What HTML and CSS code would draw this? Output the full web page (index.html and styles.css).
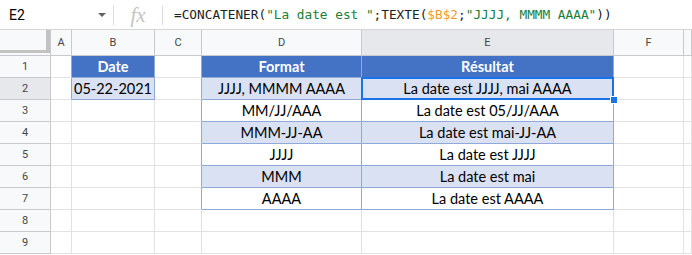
FILE: index.html
```html
<!DOCTYPE html>
<html lang="fr">
<head>
    <meta charset="UTF-8">
    <title>TEXTE - format de date</title>
    <link rel="stylesheet" href="styles.css">
</head>
<body>

    <div class="formula-bar">
        <div class="name-box">
            <span class="cell-ref">E2</span>
            <span class="caret"></span>
        </div>
        <div class="sep"></div>
        <div class="fx">fx</div>
        <div class="sep"></div>
        <div class="formula">=CONCATENER(<span class="str">"La date est "</span>;TEXTE(<span class="ref">$B$2</span>;<span class="str">"JJJJ, MMMM AAAA"</span>))</div>
    </div>

    <div class="sheet">
        <!-- en-tetes de colonnes -->
        <div class="corner"><div class="freeze"></div></div>
        <div class="col-h">A</div>
        <div class="col-h">B</div>
        <div class="col-h">C</div>
        <div class="col-h">D</div>
        <div class="col-h sel">E</div>
        <div class="col-h">F</div>
        <div class="col-h"></div>

        <!-- ligne 1 -->
        <div class="row-h">1</div>
        <div class="cell tb-r"></div>
        <div class="cell th">Date</div>
        <div class="cell tb-r"></div>
        <div class="cell th">Format</div>
        <div class="cell th">Résultat</div>
        <div class="cell"></div>
        <div class="cell"></div>

        <!-- ligne 2 -->
        <div class="row-h sel">2</div>
        <div class="cell tb-r"></div>
        <div class="cell td band">05-22-2021</div>
        <div class="cell tb-r"></div>
        <div class="cell td band">JJJJ, MMMM AAAA</div>
        <div class="cell td band active">La date est JJJJ, mai AAAA<span class="handle"></span></div>
        <div class="cell"></div>
        <div class="cell"></div>

        <!-- ligne 3 -->
        <div class="row-h">3</div>
        <div class="cell"></div>
        <div class="cell"></div>
        <div class="cell tb-r"></div>
        <div class="cell td">MM/JJ/AAA</div>
        <div class="cell td">La date est 05/JJ/AAA</div>
        <div class="cell"></div>
        <div class="cell"></div>

        <!-- ligne 4 -->
        <div class="row-h">4</div>
        <div class="cell"></div>
        <div class="cell"></div>
        <div class="cell tb-r"></div>
        <div class="cell td band">MMM-JJ-AA</div>
        <div class="cell td band">La date est mai-JJ-AA</div>
        <div class="cell"></div>
        <div class="cell"></div>

        <!-- ligne 5 -->
        <div class="row-h">5</div>
        <div class="cell"></div>
        <div class="cell"></div>
        <div class="cell tb-r"></div>
        <div class="cell td">JJJJ</div>
        <div class="cell td">La date est JJJJ</div>
        <div class="cell"></div>
        <div class="cell"></div>

        <!-- ligne 6 -->
        <div class="row-h">6</div>
        <div class="cell"></div>
        <div class="cell"></div>
        <div class="cell tb-r"></div>
        <div class="cell td band">MMM</div>
        <div class="cell td band">La date est mai</div>
        <div class="cell"></div>
        <div class="cell"></div>

        <!-- ligne 7 -->
        <div class="row-h">7</div>
        <div class="cell"></div>
        <div class="cell"></div>
        <div class="cell tb-r"></div>
        <div class="cell td">AAAA</div>
        <div class="cell td">La date est AAAA</div>
        <div class="cell"></div>
        <div class="cell"></div>

        <!-- ligne 8 -->
        <div class="row-h">8</div>
        <div class="cell"></div>
        <div class="cell"></div>
        <div class="cell"></div>
        <div class="cell"></div>
        <div class="cell"></div>
        <div class="cell"></div>
        <div class="cell"></div>

        <!-- ligne 9 -->
        <div class="row-h">9</div>
        <div class="cell"></div>
        <div class="cell"></div>
        <div class="cell"></div>
        <div class="cell"></div>
        <div class="cell"></div>
        <div class="cell"></div>
        <div class="cell"></div>
    </div>

</body>
</html>
```

FILE: styles.css
```css
body {
    margin: 0;
    font-family: Roboto, Arial, sans-serif;
    background: #fff;
    overflow: hidden;
}

/* barre de formule */
.formula-bar {
    display: flex;
    align-items: center;
    height: 30px;
    border-bottom: 1px solid #d3d5d8;
    box-sizing: border-box;
}

.name-box {
    width: 113px;
    height: 100%;
    display: flex;
    align-items: center;
    padding-left: 9px;
    box-sizing: border-box;
}

.cell-ref {
    font-size: 14px;
    color: #000;
}

.caret {
    margin-left: auto;
    margin-right: 7px;
    border-left: 4px solid transparent;
    border-right: 4px solid transparent;
    border-top: 4px solid #5f6368;
}

.sep {
    width: 1px;
    height: 20px;
    background: #dadce0;
}

.fx {
    width: 48px;
    text-align: center;
    font-family: "Liberation Serif", serif;
    font-style: italic;
    font-size: 21px;
    color: #c4c4c4;
    line-height: 20px;
}

.formula {
    padding-left: 11px;
    font-family: "DejaVu Sans Mono", monospace;
    font-size: 12.75px;
    color: #202124;
    white-space: nowrap;
}

.str {
    color: #188038;
}

.ref {
    color: #f29b2a;
}

/* grille */
.sheet {
    display: grid;
    grid-template-columns: 51px 21px 83px 47px 160px 252px 70px 1fr;
    grid-template-rows: 26px;
    grid-auto-rows: 22px;
}

.sheet > div {
    box-sizing: border-box;
    border-right: 1px solid #e2e2e2;
    border-bottom: 1px solid #e2e2e2;
}

.corner {
    background: #f8f9fa;
}

.sheet > .corner,
.sheet > .col-h,
.sheet > .row-h {
    border-color: #c7c9cc;
}

.freeze {
    width: 46px;
    height: 20px;
    border-right: 4px solid #c2c2c2;
    border-bottom: 3px solid #c2c2c2;
}

.col-h, .row-h {
    background: #f8f9fa;
    color: #444746;
    font-size: 11px;
    display: flex;
    align-items: center;
    justify-content: center;
}

.col-h.sel, .row-h.sel {
    background: #e6e8eb;
}

.cell {
    font-family: Lato, "Open Sans", sans-serif;
    font-size: 14.5px;
    color: #000;
    display: flex;
    align-items: center;
    justify-content: center;
    white-space: nowrap;
}

.sheet > .tb-r {
    border-right-color: #8eaadb;
}

.sheet > .th,
.sheet > .td {
    border-color: #8eaadb;
}

.th {
    background: #4472c4;
    color: #fff;
    font-weight: bold;
}

.band {
    background: #d9e1f2;
}

.active {
    position: relative;
}

.active::after {
    content: "";
    position: absolute;
    left: -1px;
    top: -1px;
    right: -1px;
    bottom: -1px;
    border: 2px solid #1a73e8;
}

.handle {
    position: absolute;
    right: -5px;
    bottom: -5px;
    width: 6px;
    height: 6px;
    background: #1a73e8;
    border: 1px solid #fff;
    z-index: 2;
}
```
